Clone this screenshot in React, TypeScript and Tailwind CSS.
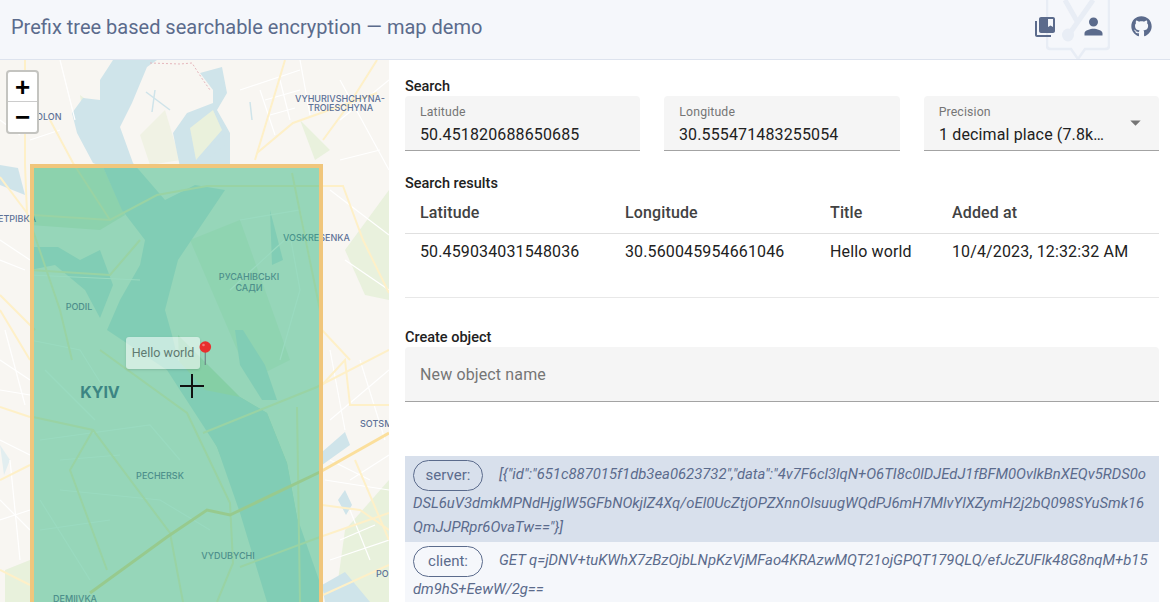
import type { ReactNode } from "react";
import { MdCollectionsBookmark, MdPerson, MdArrowDropDown } from "react-icons/md";
import { FaGithub } from "react-icons/fa";

const roads = [
  "M33 155 L110 160 L157 135 L207 126 L343 126 L363 180 L389 233",
  "M25 0 L25 105 L27 153 L60 250 L72 300",
  "M50 60 L73 103 L110 160",
  "M0 117 L27 153",
  "M0 235 L35 270",
  "M323 80 L350 43 L377 0",
  "M257 93 L293 63 L377 33",
  "M255 100 L285 0",
  "M292 113 L322 260",
  "M33 357 L93 370 L170 473 L183 542",
  "M93 370 L70 410 L107 510",
  "M100 290 L187 353 L230 443 L233 503 L217 542",
  "M203 373 L317 327 L389 290",
  "M240 507 L320 477 L389 453",
  "M297 347 L300 542",
  "M0 347 L30 357",
  "M322 325 L345 300 L350 345 L389 345",
  "M322 445 L360 450 L389 470",
  "M0 250 L30 300",
  "M322 270 L350 300",
  "M355 400 L389 480",
  "M0 510 L30 525",
  "M0 420 L30 405",
  "M30 210 L110 215 L140 180",
  "M323 535 L389 505",
];

const streets = [
  "M30 215 L140 220",
  "M30 280 L80 290 L105 330",
  "M45 310 L95 360",
  "M40 380 L150 365 L180 400",
  "M60 430 L160 440 L210 470",
  "M230 230 L290 175 L300 230 L280 300",
  "M240 160 L300 150 L310 200",
  "M330 130 L389 175",
  "M345 200 L389 230",
  "M330 360 L389 310",
  "M350 420 L389 395",
  "M340 20 L389 110",
  "M0 180 L30 200",
  "M0 460 L30 450",
  "M0 380 L30 395",
  "M240 30 L300 10",
  "M260 30 L275 75",
  "M60 0 L75 60",
  "M40 440 L90 520",
  "M60 400 L120 395",
  "M40 470 L110 460",
  "M330 400 L370 420",
  "M340 480 L375 465",
  "M340 100 L380 90",
  "M0 60 L20 75",
  "M300 0 L310 55",
  "M0 300 L30 320",
  "M0 330 L30 335",
  "M5 270 L25 345",
  "M0 440 L30 470",
  "M10 400 L20 500",
  "M330 290 L345 370",
  "M360 300 L385 380",
  "M325 420 L389 430",
  "M330 500 L389 480",
  "M350 450 L370 500",
  "M265 40 L300 30",
  "M270 55 L295 48",
  "M280 20 L290 60",
  "M0 200 L25 210",
  "M30 80 L60 70",
  "M340 60 L389 20",
];

function MapCanvas() {
  return (
    <svg viewBox="0 0 389 542" className="block h-full w-full">
      <rect width="389" height="542" fill="#f8f6f2" />
      {/* parks */}
      <path d="M140 75 L165 50 L180 100 L150 105 Z" fill="#f0f2e4" />
      <path d="M345 470 L389 420 L389 542 L335 542 Z" fill="#e8f1dc" />
      <path d="M345 190 L389 130 L389 240 L365 235 Z" fill="#e9f1dd" />
      <path d="M5 510 L30 500 L30 542 L5 542 Z" fill="#e8f1dc" />
      <path d="M300 60 L330 90 L315 100 Z" fill="#e9f1dd" />
      <path d="M80 35 L100 50 L95 90 L85 70 Z" fill="#eaf1de" />
      <path d="M30 107 L103 107 L125 155 L100 170 L30 165 Z" fill="#e4eedb" />
      <path d="M178 275 L240 337 L267 353 L287 403 L297 457 L250 470 L217 387 L180 320 Z" fill="#d6e8cb" />
      <path d="M190 180 L240 160 L290 300 L250 320 Z" fill="#ebf2e2" />
      {/* water */}
      <path
        d="M113 0 L100 20 L100 40 L83 38 L72 53 L77 73 L93 103 L103 107 L122 150 L145 180 L140 205 L120 240 L107 270 L167 310 L217 387 L240 453 L267 542 L320 542 L320 523 L297 457 L287 403 L267 353 L240 337 L205 330 L178 300 L172 275 L165 250 L178 200 L225 130 L195 125 L165 140 L133 103 L120 67 L132 43 L147 7 L157 0 Z"
        fill="#cfe4ea"
      />
      <path
        d="M200 13 L222 7 L227 33 L217 50 L230 73 L230 107 L180 107 L173 73 L187 53 L213 43 L213 30 Z"
        fill="#cfe4ea"
      />
      <path d="M190 68 L213 50 L222 70 L196 100 Z" fill="#eaf1dc" />
      <path d="M205 90 L225 75 L225 85 L210 97 Z" fill="#cfe4ea" />
      <path d="M30 187 L58 187 L80 200 L100 190 L113 225 L100 258 L85 230 L55 205 L30 210 Z" fill="#cfe4ea" />
      <path d="M235 270 L243 270 L265 305 L277 340 L262 340 L240 305 Z" fill="#cfe4ea" />
      <path d="M270 150 L283 200 L272 205 Z" fill="#cfe4ea" />
      <path d="M0 105 L18 108 L25 135 L0 125 Z" fill="#cfe4ea" />
      <path d="M0 385 L10 400 L4 415 Z" fill="#e2eef0" />
      <path d="M322 392 L345 372 L350 385 L322 405 Z" fill="#cfe4ea" />
      <path d="M338 440 L345 430 L352 445 L346 455 Z" fill="#cfe4ea" />
      <path d="M322 525 L345 512 L370 542 L325 542 Z" fill="#cfe4ea" />
      <path d="M150 3 L180 4 L192 3 L203 20 L210 30" fill="none" stroke="#e6b7bd" strokeWidth="1" strokeDasharray="2 2" />
      <path d="M146 32 L170 50 M155 30 L152 52 M250 42 L252 60" stroke="#cfe4ea" strokeWidth="1.5" fill="none" />
      {streets.map((d) => (
        <path key={d} d={d} fill="none" stroke="#ffffff" strokeWidth="1.2" />
      ))}
      {roads.map((d) => (
        <path key={d} d={d} fill="none" stroke="#fef0c8" strokeWidth="2" />
      ))}
      <path d="M90 533 L167 477 L207 450 L230 455 L320 412 L389 373" fill="none" stroke="#fbdf9c" strokeWidth="3" />
      <g fontFamily="Inter, sans-serif" fill="#5d7197" fontSize="9" fontWeight="500">
        <text x="295" y="42">VYHURIVSHCHYNA-</text>
        <text x="308" y="51">TROIESCHYNA</text>
        <text x="36" y="60">OLON</text>
        <text x="-2" y="162">ЕТРІВКА</text>
        <text x="283" y="181">VOSKRESENKA</text>
        <text x="360" y="367">SOTSM</text>
        <text x="376" y="517">PO</text>
      </g>
    </svg>
  );
}

function OverlayLabels() {
  return (
    <svg viewBox="0 0 293 438" className="block h-full w-full">
      <g fontFamily="Inter, sans-serif" fill="#4d8f8b" fontSize="9" fontWeight="500" textAnchor="middle">
        <text x="219" y="116">РУСАНІВСЬКІ</text>
        <text x="219" y="127">САДИ</text>
        <text x="49" y="146">PODIL</text>
        <text x="130" y="315">PECHERSK</text>
        <text x="198" y="395">VYDUBYCHI</text>
        <text x="45" y="438">DEMIIVKA</text>
        <text x="70" y="234" fontSize="16" fontWeight="700" fill="#3c8583">KYIV</text>
      </g>
    </svg>
  );
}

// the reference text is taller than its width, so squeeze it a bit
function Tall({ children }: { children: ReactNode }) {
  return <span className="inline-block origin-left scale-x-[0.94] whitespace-nowrap">{children}</span>;
}

function Field({ label, value, select }: { label: string; value: string; select?: boolean }) {
  return (
    <div className="relative h-[55px] flex-1 rounded-t bg-[#f5f5f5] border-b border-[#a3a3a3] px-[15px] pt-[8px]">
      <div className="text-[12.25px] leading-[17px] text-[#757575] tracking-[0.15px]">{label}</div>
      <div className="mt-[1px] text-[17px] leading-[24px] text-[#212121] tracking-[0.15px]">
        <Tall>{value}</Tall>
      </div>
      {select && <MdArrowDropDown className="absolute right-[11px] top-[14px] text-[25px] text-[#757575]" />}
    </div>
  );
}

const chip =
  "inline-block h-[31px] w-[70px] rounded-full border border-[#5b6b8c] text-center not-italic text-[15px] leading-[29px] text-[#5b6b8c] mr-4 align-middle";

const headCell = "pl-[15px] text-left font-medium text-[#424242]";

export default function App() {
  return (
    <div className="h-[602px] w-[1170px] overflow-hidden bg-white font-['Roboto',sans-serif]">
      <header className="relative flex h-[60px] items-center justify-between overflow-hidden border-b border-[#dde3ee] bg-[#f5f7fb] pb-[6px] pl-[11px] pr-[5px]">
        <h1 className="text-[20px] font-normal text-[#5b6b8c]">
          Prefix tree based searchable encryption — map demo
        </h1>
        <svg viewBox="0 0 64 60" className="absolute left-[1046px] top-0 h-[60px] w-[64px]" fill="none" stroke="#e8edf5" strokeWidth="2.5">
          <path d="M1 0 V46 Q1 49 5 49 H25 L32 59 L39 49 H59 Q63 49 63 46 V0" />
          <path d="M19 0 L32 23 M47 0 L24 33" strokeWidth="5" />
          <ellipse cx="22" cy="35" rx="6" ry="6.5" fill="#e8edf5" stroke="none" />
        </svg>
        <div className="relative flex items-center text-[#5b6b8c]">
          <div className="flex w-[48px] justify-center"><MdCollectionsBookmark className="text-[24px]" /></div>
          <div className="flex w-[48px] justify-center"><MdPerson className="text-[27px]" /></div>
          <div className="flex w-[48px] justify-center"><FaGithub className="text-[21px]" /></div>
        </div>
      </header>

      <div className="flex h-[542px]">
        <div className="relative h-[542px] w-[389px] shrink-0 overflow-hidden">
          <MapCanvas />
          <div className="absolute left-[30px] top-[104px] h-[438px] w-[293px] border-4 border-b-0 border-[#f0c67c] bg-[#34b57f]/50">
            <div className="absolute -left-[4px] -top-[4px] h-[438px] w-[293px]">
              <OverlayLabels />
            </div>
          </div>
          <div className="absolute left-[6px] top-[10px] w-[33px] overflow-hidden rounded border-2 border-[#c4c4c0] bg-white text-black">
            <div className="flex h-[30px] items-center justify-center border-b border-[#ccc] text-[26px] font-bold leading-none font-['Liberation_Sans',sans-serif]">+</div>
            <div className="flex h-[30px] items-center justify-center text-[26px] font-bold leading-none font-['Liberation_Sans',sans-serif]">−</div>
          </div>
          <div className="absolute left-[126px] top-[277px] flex h-[32px] w-[74px] items-center justify-center rounded-[3px] bg-white/55 text-[12.5px] text-[#5f7a70] shadow-sm">
            Hello world
          </div>
          <svg viewBox="0 0 14 28" className="absolute left-[199px] top-[280px] h-[28px] w-[14px]">
            <path d="M6.3 12 V25" stroke="#6f8f8a" strokeWidth="1.3" />
            <circle cx="6.3" cy="7" r="5.8" fill="#e8302e" />
            <circle cx="4.5" cy="5" r="1.3" fill="#f47a78" />
          </svg>
          <svg viewBox="0 0 26 26" className="absolute left-[179px] top-[313px] h-[26px] w-[26px]">
            <path d="M13 1 V25 M1 13 H25" stroke="#111" strokeWidth="2" />
          </svg>
        </div>

        <main className="min-w-0 flex-1 pl-[16px] pr-[11px]">
          <div className="pt-[17px] text-[14.5px] font-medium leading-[19px] text-[#212121]">Search</div>
          <div className="flex gap-[24px]">
            <Field label="Latitude" value="50.451820688650685" />
            <Field label="Longitude" value="30.555471483255054" />
            <Field label="Precision" value="1 decimal place (7.8k…" select />
          </div>

          <div className="pt-[23px] text-[14.5px] font-medium leading-[19px] text-[#212121]">Search results</div>
          <table className="w-full table-fixed text-[17px] tracking-[0.15px] text-[#212121]">
            <colgroup>
              <col className="w-[205px]" />
              <col className="w-[205px]" />
              <col className="w-[122px]" />
              <col />
            </colgroup>
            <thead>
              <tr className="h-[40px] border-b border-[#e0e0e0]">
                <th className={headCell}><Tall>Latitude</Tall></th>
                <th className={headCell}><Tall>Longitude</Tall></th>
                <th className={headCell}><Tall>Title</Tall></th>
                <th className={headCell}><Tall>Added at</Tall></th>
              </tr>
            </thead>
            <tbody>
              <tr className="h-[36px]">
                <td className="pl-[15px]"><Tall>50.459034031548036</Tall></td>
                <td className="pl-[15px]"><Tall>30.560045954661046</Tall></td>
                <td className="pl-[15px]"><Tall>Hello world</Tall></td>
                <td className="pl-[15px]"><Tall>10/4/2023, 12:32:32 AM</Tall></td>
              </tr>
            </tbody>
          </table>
          <div className="mt-[28px] border-t border-[#e8e8e8]" />

          <div className="pt-[30px] text-[14.5px] font-medium leading-[19px] text-[#212121]">Create object</div>
          <div className="flex h-[55px] items-center rounded-t bg-[#f5f5f5] border-b border-[#a3a3a3] px-[15px] pt-[2px] text-[17px] tracking-[0.15px] text-[#757575]">
            <Tall>New object name</Tall>
          </div>

          <div className="mt-[54px] h-[86px] bg-[#d8e0ec] px-[8px] pt-[4px] text-[14.85px] italic leading-[24px] text-[#5b6b8c] break-all">
            <span className={chip}>server:</span>
            {'[{"id":"651c887015f1db3ea0623732","data":"4v7F6cl3lqN+O6TI8c0lDJEdJ1fBFM0OvlkBnXEQv5RDS0oDSL6uV3dmkMPNdHjglW5GFbNOkjlZ4Xq/oEl0UcZtjOPZXnnOlsuugWQdPJ6mH7MlvYlXZymH2j2bQ098SYuSmk16QmJJPRpr6OvaTw=="}]'}
          </div>
          <div className="h-[60px] bg-[#f5f7fb] px-[8px] pt-[4px] text-[14.85px] italic leading-[24px] text-[#5b6b8c] break-all">
            <span className={chip}>client:</span>
            GET q=jDNV+tuKWhX7zBzOjbLNpKzVjMFao4KRAzwMQT21ojGPQT179QLQ/efJcZUFlk48G8nqM+b15dm9hS+EewW/2g==
          </div>
        </main>
      </div>
    </div>
  );
}
